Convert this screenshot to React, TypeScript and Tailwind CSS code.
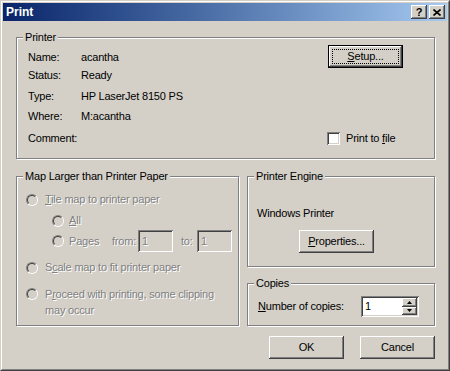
import type { ReactNode } from 'react';

const raised =
  'shadow-[inset_-1px_-1px_0_#404040,inset_1px_1px_0_#fff,inset_-2px_-2px_0_#808080]';
const sunken =
  'shadow-[inset_1px_1px_0_#808080,inset_-1px_-1px_0_#fff,inset_2px_2px_0_#404040,inset_-2px_-2px_0_#d4d0c8]';
const dim = 'text-[#808080] [text-shadow:1px_1px_0_#fff]';

function Group({ label, className, children }: { label: string; className: string; children?: ReactNode }) {
  return (
    <div className={`relative border border-[#808080] shadow-[inset_1px_1px_0_#fff,1px_1px_0_#fff] ${className}`}>
      <span className="absolute left-[6px] top-[-7px] bg-[#d4d0c8] px-[2px] leading-[13px]">{label}</span>
      {children}
    </div>
  );
}

function Button({ children, isDefault, className = '' }: { children: ReactNode; isDefault?: boolean; className?: string }) {
  return (
    <div
      className={`relative flex h-[23px] w-[75px] items-center justify-center bg-[#d4d0c8] ${raised} ${
        isDefault ? 'border border-black' : ''
      } ${className}`}
    >
      {isDefault && <span className="absolute inset-[3px] border border-dotted border-black" />}
      <span className="leading-[13px]">{children}</span>
    </div>
  );
}

function Radio() {
  return (
    <span className="block h-[12px] w-[12px] shrink-0 rounded-full border border-t-[#808080] border-l-[#808080] border-b-white border-r-white">
      <span className="block h-full w-full rounded-full border border-t-[#404040] border-l-[#404040] border-b-[#d4d0c8] border-r-[#d4d0c8] bg-[#d4d0c8]" />
    </span>
  );
}

function Field({ label, value, className }: { label: string; value?: string; className: string }) {
  return (
    <div className={`flex h-[13px] leading-[13px] ${className}`}>
      <span className="w-[53px]">{label}</span>
      <span>{value}</span>
    </div>
  );
}

function Spin({ up }: { up?: boolean }) {
  return (
    <div className={`flex flex-1 items-center justify-center bg-[#d4d0c8] ${raised}`}>
      <svg width="5" height="3" viewBox="0 0 5 3">
        <path d={up ? 'M2.5 0 L5 3 L0 3 Z' : 'M0 0 L5 0 L2.5 3 Z'} fill="#000" />
      </svg>
    </div>
  );
}

export default function App() {
  return (
    <div className="h-[371px] w-[450px] border border-t-[#d4d0c8] border-l-[#d4d0c8] border-b-[#404040] border-r-[#404040] bg-[#d4d0c8] font-['Liberation_Sans',Arial,sans-serif] text-[11px] tracking-[-0.2px] text-black">
      <div className="flex h-full flex-col border border-t-white border-l-white border-b-[#808080] border-r-[#808080] p-[1px]">
        {/* Title bar */}
        <div className="flex h-[18px] items-center justify-between bg-gradient-to-r from-[#0a246a] to-[#a6caf0] pl-[3px] pr-[2px]">
          <span className="text-[12px] font-bold leading-[14px] tracking-normal text-white">Print</span>
          <div className="flex gap-[2px]">
            <div className={`flex h-[14px] w-[16px] items-center justify-center bg-[#d4d0c8] ${raised}`}>
              <span className="text-[11px] font-bold leading-[11px]">?</span>
            </div>
            <div className={`flex h-[14px] w-[16px] items-center justify-center bg-[#d4d0c8] ${raised}`}>
              <svg width="8" height="7" viewBox="0 0 8 7">
                <path d="M0.5 0.5 L7.5 6.5 M7.5 0.5 L0.5 6.5" stroke="#000" strokeWidth="1.6" />
              </svg>
            </div>
          </div>
        </div>

        {/* Body */}
        <div className="flex w-[432px] flex-col pl-[13px] pt-[16px]">
          <Group label="Printer" className="flex h-[122px] w-[419px]">
            <div className="flex flex-col pl-[11px]">
              <Field label="Name:" value="acantha" className="mt-[13px]" />
              <Field label="Status:" value="Ready" className="mt-[5px]" />
              <Field label="Type:" value="HP LaserJet 8150 PS" className="mt-[8px]" />
              <Field label="Where:" value="M:acantha" className="mt-[7px]" />
              <Field label="Comment:" className="mt-[9px]" />
            </div>
            <div className="ml-auto mr-[31px] flex w-[76px] flex-col pt-[7px]">
              <Button isDefault className="ml-[1px]">
                <span className="underline">S</span>etup...
              </Button>
              <div className="mt-[64px] flex items-center">
                <span className={`h-[13px] w-[13px] bg-white ${sunken}`} />
                <span className="ml-[6px] leading-[13px]">
                  Print to <span className="underline">f</span>ile
                </span>
              </div>
            </div>
          </Group>

          <div className="mt-[17px] flex gap-[8px]">
            <Group label="Map Larger than Printer Paper" className="flex h-[150px] w-[223px] flex-col pl-[9px]">
              <div className="mt-[16px] flex h-[13px] items-center">
                <Radio />
                <span className={`ml-[7px] leading-[13px] ${dim}`}>
                  <span className="underline">T</span>ile map to printer paper
                </span>
              </div>
              <div className="ml-[26px] mt-[8px] flex h-[13px] items-center">
                <Radio />
                <span className={`ml-[5px] leading-[13px] ${dim}`}>
                  <span className="underline">A</span>ll
                </span>
              </div>
              <div className="ml-[26px] mt-[3px] flex h-[22px] items-center">
                <Radio />
                <span className={`ml-[5px] w-[43px] leading-[13px] ${dim}`}>
                  Pa<span className="underline">g</span>es
                </span>
                <span className={`w-[26px] leading-[13px] ${dim}`}>from:</span>
                <div className={`flex h-[22px] w-[35px] items-center bg-[#d4d0c8] pl-[4px] ${sunken}`}>
                  <span className={dim}>1</span>
                </div>
                <span className={`ml-[8px] w-[16px] leading-[13px] ${dim}`}>to:</span>
                <div className={`flex h-[22px] w-[35px] items-center bg-[#d4d0c8] pl-[4px] ${sunken}`}>
                  <span className={dim}>1</span>
                </div>
              </div>
              <div className="mt-[9px] flex h-[13px] items-center">
                <Radio />
                <span className={`ml-[7px] leading-[13px] ${dim}`}>
                  S<span className="underline">c</span>ale map to fit printer paper
                </span>
              </div>
              <div className="mt-[13px] flex items-start">
                <div className="flex h-[13px] items-center">
                  <Radio />
                </div>
                <span className={`ml-[7px] leading-[16px] -mt-[1px] ${dim}`}>
                  P<span className="underline">r</span>oceed with printing, some clipping
                  <br />
                  may occur
                </span>
              </div>
            </Group>

            <div className="flex w-[188px] flex-col">
              <Group label="Printer Engine" className="flex h-[91px] flex-col">
                <span className="ml-[9px] mt-[30px] leading-[13px]">Windows Printer</span>
                <Button className="ml-[51px] mt-[10px]">
                  <span className="underline">P</span>roperties...
                </Button>
              </Group>
              <Group label="Copies" className="mt-[16px] flex h-[43px] items-start">
                <div className="ml-[10px] mt-[12px] flex h-[21px] items-center">
                  <span className="w-[103px] leading-[13px]">
                    <span className="underline">N</span>umber of copies:
                  </span>
                  <div className={`flex h-[21px] w-[58px] bg-white p-[2px] ${sunken}`}>
                    <span className="flex-1 pl-[2px] leading-[17px]">1</span>
                    <div className="flex w-[15px] flex-col">
                      <Spin up />
                      <Spin />
                    </div>
                  </div>
                </div>
              </Group>
            </div>
          </div>

          <div className="mt-[10px] flex w-[419px] justify-end gap-[16px]">
            <Button>OK</Button>
            <Button>Cancel</Button>
          </div>
        </div>
      </div>
    </div>
  );
}
